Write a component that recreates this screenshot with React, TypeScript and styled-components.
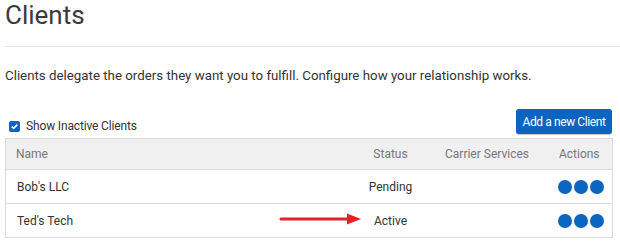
import React from "react";
import styled, { createGlobalStyle } from "styled-components";

const Global = createGlobalStyle`
  html, body { margin: 0; padding: 0; background: #fff; }
  body { font-family: Roboto, "Liberation Sans", sans-serif; color: #333; }
`;

const Page = styled.div`
  position: relative;
  padding: 0 7px 0 5px;
  width: 620px;
  box-sizing: border-box;
`;

const Title = styled.h1`
  margin: 0;
  font-size: 26px;
  line-height: 30px;
  font-weight: 400;
  color: #3a3a3a;
`;

const Rule = styled.hr`
  margin: 16px -7px 0 0;
  border: 0;
  border-top: 1px solid #e6e6e6;
`;

const Lead = styled.p`
  margin: 20px 0 0;
  font-size: 13.3px;
  line-height: 18px;
  color: #333;
`;

const Toolbar = styled.div`
  margin-top: 24px;
  display: flex;
  align-items: flex-end;
  justify-content: space-between;
  padding-right: 1px;
`;

const CheckLabel = styled.label`
  display: flex;
  align-items: center;
  gap: 6px;
  padding-left: 4px;
  height: 16px;
  font-size: 12px;
  letter-spacing: -0.15px;
  color: #333;
`;

const Box = styled.span`
  width: 11px;
  height: 11px;
  border-radius: 2px;
  background: #0b64c0;
  display: flex;
  align-items: center;
  justify-content: center;
`;

const Button = styled.button`
  height: 25px;
  width: 96px;
  padding: 0;
  border: 0;
  border-radius: 3px;
  background: #0b64c0;
  color: #fff;
  font-family: Roboto, "Liberation Sans", sans-serif;
  font-size: 12px;
  letter-spacing: -0.4px;
  box-shadow: 0 1px 1px rgba(0, 0, 0, 0.25);
`;

const Table = styled.table`
  margin-top: 4px;
  width: 608px;
  table-layout: fixed;
  border-collapse: collapse;
  border: 1px solid #dcdcdc;
  font-size: 12px;
`;

const Head = styled.th<{ $align?: string; $w?: number; $pl?: number; $pr?: number }>`
  box-sizing: border-box;
  background: #f0f0f0;
  color: #777;
  font-weight: 400;
  height: 31px;
  padding: 0 ${(p) => p.$pr ?? 10}px 0 ${(p) => p.$pl ?? 10}px;
  text-align: ${(p) => p.$align || "left"};
  width: ${(p) => (p.$w ? p.$w + "px" : "auto")};
  border-bottom: 1px solid #dcdcdc;
`;

const Cell = styled.td<{ $align?: string; $pl?: number; $pr?: number }>`
  height: 33px;
  padding: 0 ${(p) => p.$pr ?? 11}px 0 ${(p) => p.$pl ?? 11}px;
  color: #333;
  text-align: ${(p) => p.$align || "left"};
  border-bottom: 1px solid #dcdcdc;
`;

const Dots = styled.span`
  display: inline-flex;
  gap: 2px;
  vertical-align: middle;
`;

const Dot = styled.span`
  width: 14px;
  height: 14px;
  border-radius: 50%;
  background: #0b64c0;
`;

const Arrow = styled.svg`
  position: absolute;
  left: 279px;
  top: 212px;
`;

const rows = [
  { name: "Bob's LLC", status: "Pending" },
  { name: "Ted's Tech", status: "Active" },
];

export default function App() {
  return (
    <Page>
      <Global />
      <Title>Clients</Title>
      <Rule />
      <Lead>Clients delegate the orders they want you to fulfill. Configure how your relationship works.</Lead>
      <Toolbar>
        <CheckLabel>
          <Box>
            <svg width="9" height="9" viewBox="0 0 9 9">
              <path d="M1.8 4.6 L3.7 6.4 L7.3 2.6" stroke="#fff" strokeWidth="1.6" fill="none" />
            </svg>
          </Box>
          Show Inactive Clients
        </CheckLabel>
        <Button>Add a new Client</Button>
      </Toolbar>
      <Table>
        <thead>
          <tr>
            <Head>Name</Head>
            <Head $align="center" $w={82} $pl={0} $pr={0}>Status</Head>
            <Head $align="center" $w={111} $pl={0} $pr={0}>Carrier Services</Head>
            <Head $align="center" $w={70} $pl={10} $pr={6}>Actions</Head>
          </tr>
        </thead>
        <tbody>
          {rows.map((r) => (
            <tr key={r.name}>
              <Cell>{r.name}</Cell>
              <Cell $align="center" $pl={0} $pr={0}>{r.status}</Cell>
              <Cell $align="center" $pl={0} $pr={0}></Cell>
              <Cell $align="center" $pl={13} $pr={6}>
                <Dots>
                  <Dot />
                  <Dot />
                  <Dot />
                </Dots>
              </Cell>
            </tr>
          ))}
        </tbody>
      </Table>
      <Arrow width="84" height="14" viewBox="0 0 84 14">
        <line x1="2" y1="7" x2="70" y2="7" stroke="#e3222b" strokeWidth="3" strokeLinecap="round" />
        <polygon points="68,1.5 82,7 68,12.5" fill="#e3222b" />
      </Arrow>
    </Page>
  );
}
